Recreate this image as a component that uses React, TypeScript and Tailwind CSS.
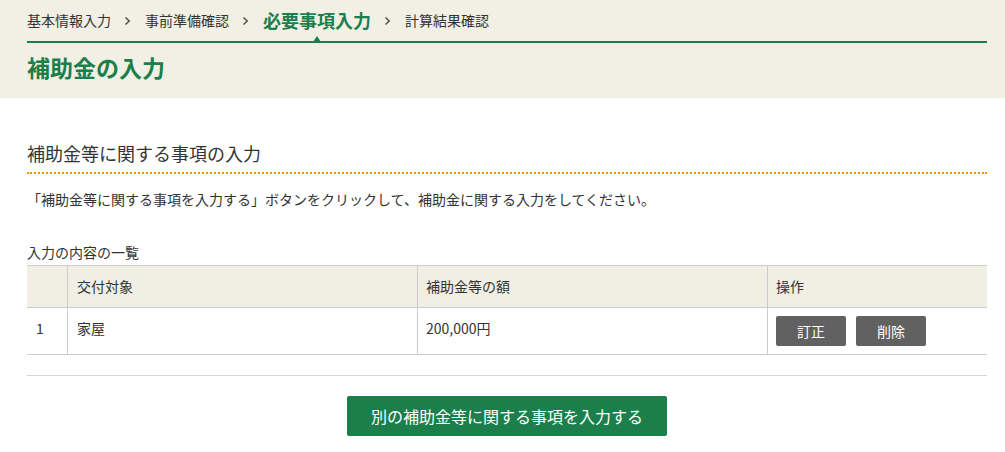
import React from "react";

const font = { fontFamily: '"Noto Sans CJK JP", "Noto Sans", sans-serif' };

function Chev() {
  return (
    <svg width="7" height="10" viewBox="0 0 7 10" className="ml-[13px] mr-[14px] shrink-0">
      <path d="M1.5 1.5 L5.2 5 L1.5 8.5" fill="none" stroke="#555" strokeWidth="1.6" />
    </svg>
  );
}

export default function App() {
  return (
    <div className="w-[1005px] min-h-[452px] bg-white text-[#333]" style={font}>
      <div className="bg-[#f2efe4] h-[98px] pl-[27px]">
        <div className="w-[960px]">
          <div className="flex items-center h-[41px] text-[14px] text-[#333]">
            <span>基本情報入力</span>
            <Chev />
            <span>事前準備確認</span>
            <Chev />
            <span className="relative text-[18px] font-bold text-[#1b7f4c]">
              必要事項入力
              <span className="absolute left-1/2 -translate-x-1/2 bottom-[-8px] w-0 h-0 border-l-[4px] border-r-[4px] border-b-[6px] border-l-transparent border-r-transparent border-b-[#1b7f4c]" />
            </span>
            <Chev />
            <span>計算結果確認</span>
          </div>
          <div className="h-[2px] bg-[#1b7f4c]" />
          <h1 className="text-[23px] font-bold text-[#1b7f4c] leading-none pt-[13px]">補助金の入力</h1>
        </div>
      </div>

      <div className="pl-[27px]">
        <div className="w-[960px]">
          <h2 className="mt-[42px] text-[18px] leading-[26px] pb-[6px] border-b-2 border-dotted border-[#e8950e]">
            補助金等に関する事項の入力
          </h2>
          <p className="mt-[15px] text-[14px] leading-[20px]">
            「補助金等に関する事項を入力する」ボタンをクリックして、補助金に関する入力をしてください。
          </p>
          <div className="mt-[33px] text-[14px] leading-[20px] mb-[3px]">入力の内容の一覧</div>
          <div className="border-t border-b border-[#cccccc] text-[14px]">
            <div className="grid grid-cols-[41px_350px_350px_219px] bg-[#f1eee4] h-[42px] border-b border-[#cccccc]">
              <div className="border-r border-[#cccccc]" />
              <div className="border-r border-[#cccccc] pl-[9px] flex items-center">交付対象</div>
              <div className="border-r border-[#cccccc] pl-[8px] flex items-center">補助金等の額</div>
              <div className="pl-[8px] flex items-center">操作</div>
            </div>
            <div className="grid grid-cols-[41px_350px_350px_219px] h-[46px]">
              <div className="border-r border-[#cccccc] pl-[9px] pt-[10px]">1</div>
              <div className="border-r border-[#cccccc] pl-[9px] pt-[10px]">家屋</div>
              <div className="border-r border-[#cccccc] pl-[8px] pt-[10px]">200,000円</div>
              <div className="pl-[8px] pt-[8px] flex gap-[10px] items-start">
                <button className="w-[70px] h-[30px] bg-[#616161] text-white rounded-[2px] text-[14px]">訂正</button>
                <button className="w-[70px] h-[30px] bg-[#616161] text-white rounded-[2px] text-[14px]">削除</button>
              </div>
            </div>
          </div>
          <div className="mt-[20px] h-px bg-[#d5d5d5]" />
          <div className="flex justify-center mt-[20px]">
            <button className="w-[320px] h-[40px] bg-[#1b7f4c] text-white text-[16px] rounded-[2px]">
              別の補助金等に関する事項を入力する
            </button>
          </div>
        </div>
      </div>
    </div>
  );
}
